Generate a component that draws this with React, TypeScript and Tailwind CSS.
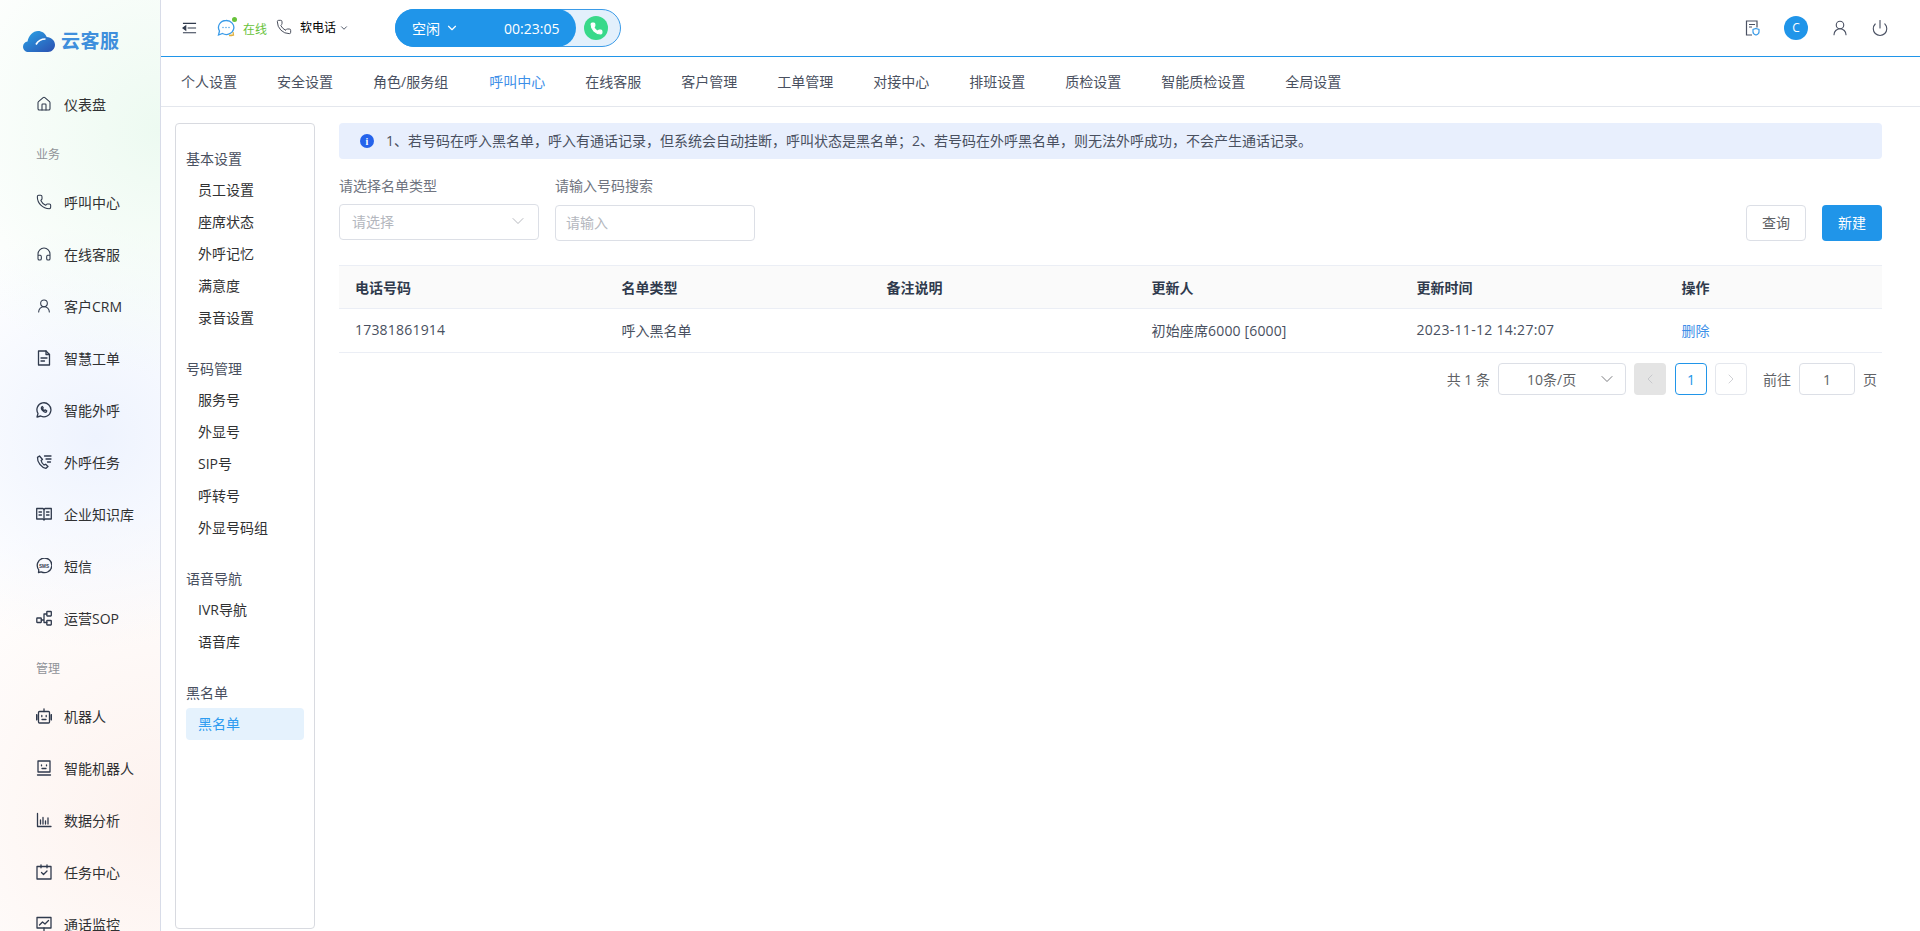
import React from "react";
import { House, Phone, Headphones, UserRound, ChevronDown, ChevronLeft, ChevronRight, Power } from "lucide-react";

const S = { fill: "none", stroke: "currentColor", strokeWidth: 1.3, strokeLinecap: "round" as const, strokeLinejoin: "round" as const };
const Svg = ({ children, className = "w-4 h-4" }: { children: React.ReactNode; className?: string }) => (
  <svg viewBox="0 0 16 16" className={className} {...S}>{children}</svg>
);
const IconOrder = () => (
  <Svg><path d="M2.500 1h7.500l3.500 3.500V15h-11z" /><path d="M10 1v3.500h3.500" /><path d="M5 8h6M5 11h3.500" /></Svg>
);
const IconWa = () => (
  <Svg><path d="M1 15l1-3.500A7 7 0 1 1 4.700 14z" /><path d="M6 4.700c-1 .7-.9 2.100.4 3.700 1.400 1.600 2.900 2.200 4 1.500l.3-1-1.600-1-.8.6c-.7-.3-1.400-1.100-1.700-1.800l.6-.8-.8-1.400z" /></Svg>
);
const IconTask = () => (
  <Svg><path d="M3.500 2L1.500 3.400c-.4 4.600 4 10.200 8.500 10.900l2-1.800-2.400-2.300-1.500.8C6.800 10 5.400 8.200 5.100 6.500l1.400-1z" /><path d="M8.500 2h6.500M10 5h5M11.500 8h3" /></Svg>
);
const IconBook = () => (
  <Svg><path d="M.7 2.500h6.300L8 3.500l1-1h6.300v10.500H9l-1 1-1-1H.7z" /><path d="M8 3.500V13" /><path d="M3 6h2.500M3 9h2.500M10.500 6H13M10.500 9H13" /></Svg>
);
const IconSms = () => (
  <svg viewBox="0 0 16 16" className="w-4 h-4" {...S}>
    <path d="M2.500 14.500l.3-2.700a7.300 7.300 0 1 1 2.400 2z" />
    <text x="8" y="9.500" textAnchor="middle" fontSize="4.600" fontWeight="700" fill="currentColor" stroke="none" fontFamily="Liberation Sans, sans-serif">SMS</text>
  </svg>
);
const IconSop = () => (
  <Svg><rect x=".8" y="8" width="4.500" height="4.500" rx=".5" /><rect x="10.800" y="1.500" width="4.500" height="4.500" rx=".5" /><rect x="10.800" y="10.500" width="4.500" height="4.500" rx=".5" /><path d="M5.300 10H8V4h2.800M8 10v2.500h2.800" /></Svg>
);
const IconBot = () => (
  <svg viewBox="0 0 16 16" className="w-4 h-4" {...S}>
    <rect x="2.500" y="3.500" width="11" height="11.500" rx="1" />
    <path d="M8 .8v2.700M5.800 7.500v1.200M10.200 7.500v1.200M6 11.500h4" />
    <path d="M.7 7v4.500M15.300 7v4.500" strokeWidth="1.800" />
  </svg>
);
const IconFace = () => (
  <Svg><path d="M2 1h12v11H2z" /><path d="M1.500 15h13" /><path d="M5.500 5v.8M10.500 5v.8M6 8.500h4" /></Svg>
);
const IconChart = () => (
  <Svg><path d="M1.500 1.500v13h13.500" /><path d="M4.500 8v4M7 5.500V12M9.500 9v3M12 6v6" /></Svg>
);
const IconCal = () => (
  <Svg><rect x="1" y="2.500" width="14" height="12.500" /><path d="M5 .8v3M11 .8v3M5.500 8.500l2 2 3.500-3.500" /></Svg>
);
const IconMon = () => (
  <Svg><rect x="1" y="1.500" width="14" height="10.500" /><path d="M3.500 9l3-3 2.500 2 3.500-3.500M8 12v2.500" /></Svg>
);

const L = { size: 18, strokeWidth: 1.6 };
const main: [string, React.ReactNode][] = [
  ["呼叫中心", <Phone {...L} />],
  ["在线客服", <Headphones {...L} />],
  ["客户CRM", <UserRound {...L} />],
  ["智慧工单", <IconOrder />],
  ["智能外呼", <IconWa />],
  ["外呼任务", <IconTask />],
  ["企业知识库", <IconBook />],
  ["短信", <IconSms />],
  ["运营SOP", <IconSop />],
];
const manage: [string, React.ReactNode][] = [
  ["机器人", <IconBot />],
  ["智能机器人", <IconFace />],
  ["数据分析", <IconChart />],
  ["任务中心", <IconCal />],
  ["通话监控", <IconMon />],
];

const NavItem = ({ label, icon }: { label: string; icon: React.ReactNode }) => (
  <div className="h-[52px] shrink-0 flex items-center pl-9 text-[14px] text-[#303133]">
    <span className="w-4 h-4 mr-[12px] flex items-center justify-center text-[#303a4d]">{icon}</span>
    {label}
  </div>
);
const NavGroup = ({ label }: { label: string }) => (
  <div className="h-[46px] pt-[4px] shrink-0 flex items-center pl-9 text-[12px] text-[#909399]">{label}</div>
);

const tabs = ["个人设置", "安全设置", "角色/服务组", "呼叫中心", "在线客服", "客户管理", "工单管理", "对接中心", "排班设置", "质检设置", "智能质检设置", "全局设置"];

const groups: [string, string[]][] = [
  ["基本设置", ["员工设置", "座席状态", "外呼记忆", "满意度", "录音设置"]],
  ["号码管理", ["服务号", "外显号", "SIP号", "呼转号", "外显号码组"]],
  ["语音导航", ["IVR导航", "语音库"]],
  ["黑名单", ["黑名单"]],
];

const cols = ["电话号码", "名单类型", "备注说明", "更新人", "更新时间", "操作"];

export default function App() {
  return (
    <div className="h-[931px] w-full flex overflow-hidden bg-white text-[14px] text-[#606266] font-['Open_Sans','Noto_Sans_CJK_SC',sans-serif]">
      <aside className="w-[161px] shrink-0 border-r border-[#d8dce8] flex flex-col overflow-hidden bg-[radial-gradient(circle_at_100%_14%,#edfaf1_0%,rgba(238,250,242,0)_30%),radial-gradient(circle_at_60%_47%,#eef3fe_0%,rgba(238,243,254,0)_42%),radial-gradient(circle_at_100%_88%,#fdf2ee_0%,rgba(253,243,239,0)_38%)]">
        <div className="h-[78px] shrink-0 flex items-center pl-[23px] pt-[4px]">
          <svg viewBox="0 0 32 21" className="w-[32px] h-[21px]">
            <defs>
              <linearGradient id="cl" x1="0" x2="1" y1="0" y2="1">
                <stop offset="0" stopColor="#29a5e8" />
                <stop offset="1" stopColor="#2b4fb0" />
              </linearGradient>
            </defs>
            <path d="M5.500 21C2.500 21 0 18.700 0 15.700c0-2.700 2-4.900 4.500-5.200C5.800 4.500 10 0 15 0c4 0 7.200 2.300 8.700 6C28.300 6.300 32 9.500 32 13.800c0 4-3 7.200-7 7.200z" fill="url(#cl)" />
            <path d="M13 13.500c2-3.500 4.500-5.500 9.500-5.500" fill="none" stroke="#fff" strokeWidth="1.700" />
          </svg>
          <span className="ml-[6px] text-[19px] font-bold tracking-[0.5px] text-[#3f8fdc]">云客服</span>
        </div>
        <NavItem label="仪表盘" icon={<House {...L} />} />
        <NavGroup label="业务" />
        {main.map(([l, i]) => <NavItem key={l} label={l} icon={i} />)}
        <NavGroup label="管理" />
        {manage.map(([l, i]) => <NavItem key={l} label={l} icon={i} />)}
      </aside>

      <div className="flex-1 min-w-0 flex flex-col">
        <header className="h-[57px] shrink-0 border-b border-[#2095e9] flex items-center pl-[21px] pr-[31px]">
          <svg viewBox="0 0 16 12" className="w-[15px] h-[12px] text-[#303a4d]" fill="none" stroke="currentColor" strokeWidth="1.200">
            <path d="M1 1h14M6 6h9M1 11h14" />
            <path d="M4 3.800L1 6l3 2.200z" fill="currentColor" />
          </svg>
          <span className="relative ml-[20px] w-[18px] h-[18px] flex items-center justify-center">
            <svg viewBox="0 0 18 18" className="w-[18px] h-[18px]" fill="none" stroke="#3a9be8" strokeWidth="1.300">
              <path d="M9 1.500a7.500 7 0 0 0-6.500 10.500L1.500 16l4-1.500A7.500 7 0 1 0 9 1.500z" />
              <path d="M12 16.500c2.500 0 4.500-.5 4.500-.5l-.5-3" stroke="#e0b040" />
              <circle cx="6" cy="8.500" r=".7" fill="#3a9be8" stroke="none" />
              <circle cx="9" cy="8.500" r=".7" fill="#3a9be8" stroke="none" />
              <circle cx="12" cy="8.500" r=".7" fill="#3a9be8" stroke="none" />
            </svg>
            <span className="absolute -top-[2px] -right-[2px] w-[5px] h-[5px] rounded-full bg-[#67c23a]" />
          </span>
          <span className="ml-[8px] mt-[3px] text-[12px] text-[#67c23a]">在线</span>
          <Phone size={16} strokeWidth={1.500} className="ml-[9px] text-[#4a4f5c] -mt-[2px]" />
          <span className="ml-[8px] -mt-[1px] text-[12px] text-black">软电话</span>
          <ChevronDown size={10} className="ml-[3px] text-[#303a4d]" />

          <div className="ml-[46px] w-[226px] h-[38px] rounded-full border border-[#3a9be8] bg-[#e3f0fc] flex items-center">
            <div className="-ml-px w-[181px] h-[38px] shrink-0 rounded-full bg-[#2095e9] flex items-center pl-[17px] text-white text-[14px]">
              空闲
              <ChevronDown size={14} strokeWidth={2} className="ml-[5px]" />
              <span className="ml-[45px]">00:23:05</span>
            </div>
            <span className="ml-[8px] w-6 h-6 shrink-0 rounded-full bg-[#38d98a] flex items-center justify-center">
              <Phone size={13} fill="#fff" stroke="#fff" />
            </span>
          </div>

          <div className="ml-auto flex items-center text-[#4a5163]">
            <svg viewBox="0 0 16 16" className="w-[16px] h-[16px]" fill="none" stroke="currentColor" strokeWidth="1.200">
              <path d="M8 15H2.500V1h10.500v6.500" />
              <path d="M5 4.500h6M5 7h3" />
              <path d="M12 8.500l3 1v2.500c0 1.500-1.500 2.500-3 3-1.500-.5-3-1.500-3-3V9.500z" stroke="#3a9be8" />
            </svg>
            <span className="ml-[24px] w-6 h-6 rounded-full bg-[#2095e9] text-white text-[12px] flex items-center justify-center">C</span>
            <UserRound size={18} strokeWidth={1.500} className="ml-[23px]" />
            <Power size={18} strokeWidth={1.500} className="ml-[22px]" />
          </div>
        </header>

        <nav className="h-[50px] shrink-0 border-b border-[#e4e7ed] flex items-center pl-[20px] gap-[40px] text-[#495060]">
          {tabs.map((t) => (
            <span key={t} className={t === "呼叫中心" ? "text-[#3d8fe8]" : t === "角色/服务组" ? "pr-[1px]" : ""}>{t}</span>
          ))}
        </nav>

        <div className="flex-1 min-h-0 flex pt-[16px] pl-[14px] pr-[38px] pb-[2px]">
          <div className="w-[140px] shrink-0 border border-[#d8dae0] rounded-[4px] px-[10px] pt-[18px] overflow-hidden">
            {groups.map(([g, items]) => (
              <div key={g} className="mb-[19px]">
                <div className={`h-[32px] flex items-center text-[#495060] ${g === "黑名单" ? "" : "-mb-px"}`}>{g}</div>
                {items.map((it, i) => (
                  <div
                    key={i}
                    className={`h-[32px] flex items-center pl-[12px] rounded-[4px] ${g === "黑名单" ? "pb-[2px] bg-[#e5f2fd] text-[#2d9bf0]" : "text-[#303133]"}`}
                  >
                    {it}
                  </div>
                ))}
              </div>
            ))}
          </div>

          <main className="flex-1 min-w-0 ml-[24px]">
            <div className="h-[36px] rounded-[4px] bg-[#e8effd] flex items-center pl-[21px] text-[#495060]">
              <span className="w-[14px] h-[14px] rounded-full bg-[#2563eb] text-white text-[10px] font-bold flex items-center justify-center font-['Liberation_Serif',serif]">i</span>
              <span className="ml-[12px] pb-[2px]">1、若号码在呼入黑名单，呼入有通话记录，但系统会自动挂断，呼叫状态是黑名单；2、若号码在外呼黑名单，则无法外呼成功，不会产生通话记录。</span>
            </div>

            <div className="mt-[16px] flex items-end">
              <div>
                <div className="h-[20px] flex items-center text-[#6f7480]">请选择名单类型</div>
                <div className="mt-[9px] mb-[1px] w-[200px] h-[36px] border border-[#dcdfe6] rounded-[4px] flex items-center pl-[12px] pr-[10px] pb-[2px] text-[#b4b7be]">
                  请选择
                  <ChevronDown size={20} strokeWidth={1} className="ml-auto text-[#a8abb2]" />
                </div>
              </div>
              <div className="ml-[16px]">
                <div className="h-[20px] flex items-center text-[#6f7480]">请输入号码搜索</div>
                <div className="mt-[10px] w-[200px] h-[36px] border border-[#dcdfe6] rounded-[4px] flex items-center pl-[10px] pb-[2px] text-[#b4b7be]">请输入</div>
              </div>
              <div className="ml-auto flex gap-[16px]">
                <div className="w-[60px] h-[36px] border border-[#dcdfe6] rounded-[4px] flex items-center justify-center pb-[2px] text-[#606266]">查询</div>
                <div className="w-[60px] h-[36px] rounded-[4px] bg-[#2095e9] flex items-center justify-center pb-[2px] text-white">新建</div>
              </div>
            </div>

            <div className="mt-[24px] border-t border-[#ebeef5]">
              <div className="h-[43px] bg-[#fafafa] border-b border-[#ebeef5] grid grid-cols-[266.5px_repeat(4,265px)_1fr] items-center pl-[16px] font-bold text-[#303a4d]">
                {cols.map((c) => <div key={c}>{c}</div>)}
              </div>
              <div className="h-[44px] border-b border-[#ebeef5] grid grid-cols-[266.5px_repeat(4,265px)_1fr] items-center pl-[16px] text-[#495060]">
                <div className="pb-[2px] tracking-[0.2px]">17381861914</div>
                <div>呼入黑名单</div>
                <div />
                <div className="tracking-[0.15px]">初始座席6000 [6000]</div>
                <div className="pb-[2px] tracking-[0.3px]">2023-11-12 14:27:07</div>
                <div className="text-[#3d8fe8]">删除</div>
              </div>
            </div>

            <div className="mt-[10px] h-[32px] flex items-center justify-end pr-[5px] text-[#606266]">
              <span>共 1 条</span>
              <div className="ml-[8px] w-[128px] h-[32px] border border-[#dcdfe6] rounded-[4px] flex items-center pl-[28px] pr-[8px]">
                10条/页
                <ChevronDown size={20} strokeWidth={1} className="ml-auto" />
              </div>
              <span className="ml-[8px] w-[32px] h-[32px] rounded-[4px] bg-[#e4e4e4] flex items-center justify-center text-[#b8bac0]"><ChevronLeft size={16} strokeWidth={1} /></span>
              <span className="ml-[9px] w-[32px] h-[32px] rounded-[4px] border border-[#2095e9] flex items-center justify-center text-[#2095e9]">1</span>
              <span className="ml-[8px] w-[32px] h-[32px] rounded-[4px] border border-[#e4e7ed] flex items-center justify-center text-[#b8bac0]"><ChevronRight size={16} strokeWidth={1} /></span>
              <span className="ml-[16px]">前往</span>
              <span className="ml-[8px] w-[56px] h-[32px] border border-[#dcdfe6] rounded-[4px] flex items-center justify-center">1</span>
              <span className="ml-[8px]">页</span>
            </div>
          </main>
        </div>
      </div>
    </div>
  );
}
